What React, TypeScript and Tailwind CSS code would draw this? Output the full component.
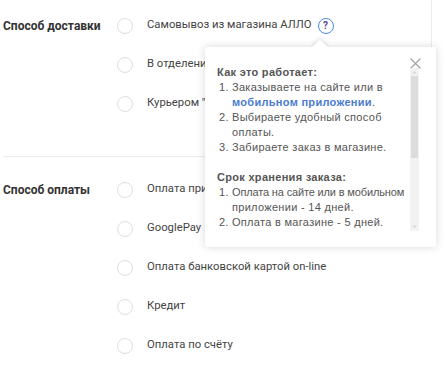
import React from "react";

const Radio = () => (
  <span className="w-[16px] h-[16px] rounded-full border border-[#dedede] bg-white shrink-0" />
);

const Row = ({ label, extra }: { label: string; extra?: React.ReactNode }) => (
  <div className="h-[39px] flex items-center">
    <div className="w-[30px] flex items-center pl-[117px] box-content">
      <Radio />
    </div>
    <span className="text-[11.3px] text-[#444] whitespace-nowrap">{label}</span>
    {extra}
  </div>
);

const Section = ({ title, items, cls }: { title: string; items: string[]; cls: string }) => (
  <div className={cls}>
    <div className="relative">
      <div className="absolute left-[3px] top-0 h-[39px] flex items-center text-[12px] font-bold text-[#333]">
        {title}
      </div>
      {items.map((it, i) => (
        <Row
          key={i}
          label={it}
          extra={
            i === 0 && title === "Способ доставки" ? (
              <span className="ml-[6px] w-[16px] h-[16px] rounded-full border border-[#4d88de] flex items-center justify-center text-[10px] font-bold text-[#5a3f95] leading-none">
                ?
              </span>
            ) : null
          }
        />
      ))}
    </div>
  </div>
);

const Item = ({ n, children }: { n: string; children: React.ReactNode }) => (
  <li className="flex">
    <span className="w-[13px] shrink-0">{n}</span>
    <span className="whitespace-nowrap">{children}</span>
  </li>
);

export default function App() {
  return (
    <div
      className="relative w-[447px] h-[387px] bg-white overflow-hidden"
      style={{ fontFamily: "Roboto, 'Liberation Sans', Arial, sans-serif" }}
    >
      <div className="w-[432px] border-r border-[#ececec]">
        <Section
          title="Способ доставки"
          cls="pt-[6px] pb-[33px]"
          items={["Самовывоз из магазина АЛЛО", "В отделение Новой Почты", 'Курьером "Новой Почты"']}
        />
      </div>
      <div className="mx-[3px] w-[429px] h-px bg-[#ececec]" />
      <Section
        title="Способ оплаты"
        cls="pt-[13px]"
        items={["Оплата при получении товара", "GooglePay", "Оплата банковской картой on-line", "Кредит", "Оплата по счёту"]}
      />

      {/* Popover */}
      <div className="absolute left-[205px] top-[47px] w-[231px] h-[200px] bg-white rounded-[3px] shadow-[0_0_8px_rgba(0,0,0,0.16)]">
        <div className="absolute left-[109px] top-[-5px] w-[12px] h-[12px] bg-white rotate-45 shadow-[-2px_-2px_4px_rgba(0,0,0,0.08)]" />
        <div className="absolute inset-0 bg-white rounded-[3px]" />
        <div
          className="absolute left-[12px] top-[18px] w-[192px] h-[168px] overflow-hidden text-[11px] leading-[15px] text-[#555] tracking-[0.3px]"
          style={{ fontFamily: "'Liberation Sans', Arial, sans-serif" }}
        >
          <div className="font-bold">Как это работает:</div>
          <ol className="pl-[2px]">
            <Item n="1.">
              Заказываете на сайте или в
              <br />
              <span className="font-bold text-[#4a7ccf]">мобильном приложении</span>.
            </Item>
            <Item n="2.">
              Выбираете удобный способ
              <br />
              оплаты.
            </Item>
            <Item n="3.">Забираете заказ в магазине.</Item>
          </ol>
          <div className="h-[15px]" />
          <div className="font-bold">Срок хранения заказа:</div>
          <ol className="pl-[2px]">
            <Item n="1.">
              <span className="tracking-[-0.15px]">Оплата на сайте или в мобильном</span>
              <br />
              приложении - 14 дней.
            </Item>
            <Item n="2.">Оплата в магазине - 5 дней.</Item>
          </ol>
        </div>
        <svg className="absolute left-[205px] top-[11px]" width="11" height="11" viewBox="0 0 11 11">
          <path d="M0.5 0.5 L10.5 10.5 M10.5 0.5 L0.5 10.5" stroke="#a0a0a0" strokeWidth="1.1" fill="none" />
        </svg>
        {/* scrollbar */}
        <div className="absolute left-[205px] top-[21px] w-[9px] h-[163px] bg-[#f2f2f2] flex flex-col items-center">
          <svg width="9" height="8" viewBox="0 0 9 8">
            <path d="M2 5.5 L4.5 3 L7 5.5 Z" fill="#d8d8d8" />
          </svg>
          <div className="w-[7px] h-[82px] bg-[#dcdcdc]" />
          <div className="flex-1" />
          <svg width="9" height="8" viewBox="0 0 9 8">
            <path d="M2 2.5 L4.5 5 L7 2.5 Z" fill="#d8d8d8" />
          </svg>
        </div>
      </div>
    </div>
  );
}
